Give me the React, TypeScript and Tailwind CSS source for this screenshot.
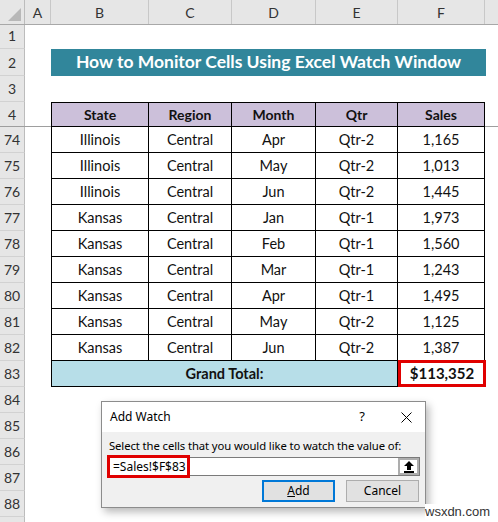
import React from 'react';

type Row = [string, string, string, string, string];

const ROWS: { n: number; cells: Row }[] = [
  { n: 74, cells: ['Illinois', 'Central', 'Apr', 'Qtr-2', '1,165'] },
  { n: 75, cells: ['Illinois', 'Central', 'May', 'Qtr-2', '1,013'] },
  { n: 76, cells: ['Illinois', 'Central', 'Jun', 'Qtr-2', '1,445'] },
  { n: 77, cells: ['Kansas', 'Central', 'Jan', 'Qtr-1', '1,973'] },
  { n: 78, cells: ['Kansas', 'Central', 'Feb', 'Qtr-1', '1,560'] },
  { n: 79, cells: ['Kansas', 'Central', 'Mar', 'Qtr-1', '1,243'] },
  { n: 80, cells: ['Kansas', 'Central', 'Apr', 'Qtr-1', '1,495'] },
  { n: 81, cells: ['Kansas', 'Central', 'May', 'Qtr-2', '1,125'] },
  { n: 82, cells: ['Kansas', 'Central', 'Jun', 'Qtr-2', '1,387'] },
];

// widths of B..F
const W = ['w-[98px]', 'w-[83px]', 'w-[84px]', 'w-[82px]', 'w-[87px]'];

const RowHead: React.FC<{ label: string | number; h: string }> = ({ label, h }) => (
  <div
    className={`${h} w-[25px] shrink-0 bg-[#e6e6e6] border-r border-r-[#bcbcbc] border-b border-b-[#d2d2d2] flex items-end justify-center pb-[2px] text-[14px] text-[#333]`}
  >
    {label}
  </div>
);

const ColHeader: React.FC = () => (
  <div className="flex h-[25px] bg-[#e6e6e6] border-b border-b-[#a8a8a8] text-[14px] text-[#333]">
    <div className="w-[25px] shrink-0 border-r border-r-[#bcbcbc] flex items-end justify-end p-[3px]">
      <svg width="13" height="13" viewBox="0 0 13 13">
        <polygon points="0,13 13,0 13,13" fill="#b8b8b8" />
      </svg>
    </div>
    {['A', 'B', 'C', 'D', 'E', 'F'].map((c, i) => (
      <div
        key={c}
        className={`${i === 0 ? 'w-[26px]' : W[i - 1]} shrink-0 border-r border-r-[#c8c8c8] flex items-center justify-center pt-[1px]`}
      >
        {c}
      </div>
    ))}
    <div className="flex-1" />
  </div>
);

const UpArrow: React.FC = () => (
  <svg width="12" height="13" viewBox="0 0 12 13">
    <polygon points="6,1 11,6 8,6 8,10 4,10 4,6 1,6" fill="#000" />
    <rect x="1" y="11" width="10" height="2" fill="#000" />
  </svg>
);

const AddWatch: React.FC = () => (
  <div className="absolute left-[101px] top-[401px] w-[325px] h-[107px] bg-[#f0f0f0] border border-[#8c8c8c] shadow-[3px_4px_8px_rgba(0,0,0,0.28)] font-['Noto_Sans',sans-serif] text-[12px] text-black">
    <div className="h-[30px] bg-white flex items-center pl-[8px] pr-[13px]">
      <span className="flex-1">Add Watch</span>
      <span className="mr-[36px] text-[13px]">?</span>
      <svg width="11" height="11" viewBox="0 0 11 11">
        <path d="M0.5 0.5 L10.5 10.5 M10.5 0.5 L0.5 10.5" stroke="#000" strokeWidth="1" />
      </svg>
    </div>
    <div className="px-[5px] pt-[6px]">
      <div className="pl-[2px] leading-[16px] text-[11.3px] tracking-[-0.1px]">Select the cells that you would like to watch the value of:</div>
      <div className="relative mt-[3px] h-[19px] bg-white border border-[#7a7a7a] flex items-center">
        <span className="pl-[5px] text-[12px]">=Sales!$F$83</span>
        <div className="absolute left-[-1px] top-[-3px] w-[83px] h-[23px] border-[3px] border-[#e00000]" />
        <div className="ml-auto h-full w-[21px] border-2 border-[#adadad] bg-white flex items-center justify-center">
          <UpArrow />
        </div>
      </div>
      <div className="flex justify-end gap-[11px] mt-[4px] pr-[1px]">
        <button className="w-[73px] h-[22px] bg-[#e1e1e1] border-2 border-[#0078d7] text-[12px] leading-none">
          <span className="underline">A</span>dd
        </button>
        <button className="w-[73px] h-[22px] bg-[#e1e1e1] border border-[#adadad] text-[12px] leading-none">
          Cancel
        </button>
      </div>
    </div>
  </div>
);

export default function App() {
  const cell = 'shrink-0 flex items-center justify-center';
  return (
    <div className="relative w-[498px] h-[522px] overflow-hidden bg-white font-['Lato',sans-serif] text-[#111]">
      <ColHeader />

      {/* rows 1-3: title banner */}
      <div className="flex">
        <RowHead label={1} h="h-[24px]" />
      </div>
      <div className="flex">
        <RowHead label={2} h="h-[27px]" />
        <div className="w-[26px] shrink-0" />
        <div className="w-[435px] h-[27px] bg-[#31869b] text-white font-bold text-[17.5px] flex items-center justify-center">
          How to Monitor Cells Using Excel Watch Window
        </div>
      </div>
      <div className="flex">
        <RowHead label={3} h="h-[26px]" />
      </div>

      {/* row 4: table header, panes frozen below it */}
      <div className="flex h-[25px] border-b border-b-[#9e9e9e]">
        <div className="w-[25px] shrink-0 bg-[#e6e6e6] border-r border-r-[#bcbcbc] flex items-end justify-center pb-[1px] text-[14px] text-[#333]">4</div>
        <div className="w-[26px] shrink-0" />
        {['State', 'Region', 'Month', 'Qtr', 'Sales'].map((h, i) => (
          <div
            key={h}
            className={`${W[i]} ${cell} h-[25px] bg-[#ccc0da] border-t border-b border-r border-black ${i === 0 ? 'border-l' : ''} font-bold text-[14px]`}
          >
            {h}
          </div>
        ))}
      </div>

      {ROWS.map(r => (
        <div key={r.n} className="flex">
          <RowHead label={r.n} h="h-[26px]" />
          <div className="w-[26px] shrink-0" />
          {r.cells.map((v, i) => (
            <div
              key={i}
              className={`${W[i]} ${cell} h-[26px] border-b border-r border-black ${i === 0 ? 'border-l' : ''} text-[14.5px]`}
            >
              {v}
            </div>
          ))}
        </div>
      ))}

      {/* row 83: grand total */}
      <div className="flex">
        <RowHead label={83} h="h-[26px]" />
        <div className="w-[26px] shrink-0" />
        <div className={`w-[347px] ${cell} h-[26px] bg-[#b7dee8] border-l border-r border-b border-black font-bold text-[14.5px]`}>
          Grand Total:
        </div>
        <div className={`w-[88px] ${cell} h-[27px] -mt-[1px] border-[3px] border-[#e00000] font-bold text-[15px]`}>
          $113,352
        </div>
      </div>

      {[84, 85, 86, 87, 88].map(n => (
        <div key={n} className="flex">
          <RowHead label={n} h="h-[26px]" />
        </div>
      ))}
      <div className="flex">
        <div className="h-[26px] w-[25px] shrink-0 bg-[#e6e6e6] border-r border-r-[#bcbcbc]" />
      </div>

      <AddWatch />

      <div className="absolute left-[425px] top-[504px] font-['Liberation_Sans',sans-serif] text-[13px] text-[#333] bg-white leading-[15px]">
        wsxdn.com
      </div>
    </div>
  );
}
